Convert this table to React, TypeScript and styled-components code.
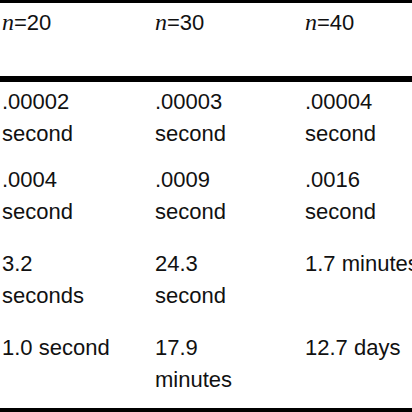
import React from 'react';
import styled, { createGlobalStyle } from 'styled-components';

const GlobalStyle = createGlobalStyle`
  html, body {
    margin: 0;
    padding: 0;
    background: #fff;
  }
  body {
    width: 412px;
    height: 412px;
    overflow: hidden;
  }
`;

const Table = styled.div`
  width: 412px;
  overflow: hidden;
  border-top: 3px solid #000;
  border-bottom: 5px solid #000;
  font-family: 'Liberation Sans', Arial, sans-serif;
  font-size: 22px;
  line-height: 32px;
  color: #111;
`;

const Row = styled.div<{ $top: number; $bottom?: number; $head?: boolean }>`
  display: grid;
  grid-template-columns: 153px 150px 150px;
  width: 455px;
  padding: ${(p) => p.$top}px 0 ${(p) => p.$bottom ?? 0}px 2px;
  border-bottom: ${(p) => (p.$head ? '6px solid #000' : 'none')};
`;

const Cell = styled.div`
  width: 116.5px;
`;

const Var = styled.span`
  font-family: 'Liberation Serif', 'Times New Roman', serif;
  font-style: italic;
  font-size: 24px;
`;

const headers = ['20', '30', '40'];

const rows: { top: number; bottom?: number; cells: string[] }[] = [
  { top: 4.4, cells: ['.00002 second', '.00003 second', '.00004 second'] },
  { top: 14, cells: ['.0004 second', '.0009 second', '.0016 second'] },
  { top: 20, cells: ['3.2 seconds', '24.3 second', '1.7 minutes'] },
  { top: 20, bottom: 11.6, cells: ['1.0 second', '17.9 minutes', '12.7 days'] },
];

export default function App() {
  return (
    <>
      <GlobalStyle />
      <Table>
        <Row $top={3.4} $bottom={36.6} $head>
          {headers.map((h) => (
            <Cell key={h}>
              <Var>n</Var>={h}
            </Cell>
          ))}
        </Row>
        {rows.map((r, i) => (
          <Row key={i} $top={r.top} $bottom={r.bottom}>
            {r.cells.map((c) => (
              <Cell key={c}>{c}</Cell>
            ))}
          </Row>
        ))}
      </Table>
    </>
  );
}
